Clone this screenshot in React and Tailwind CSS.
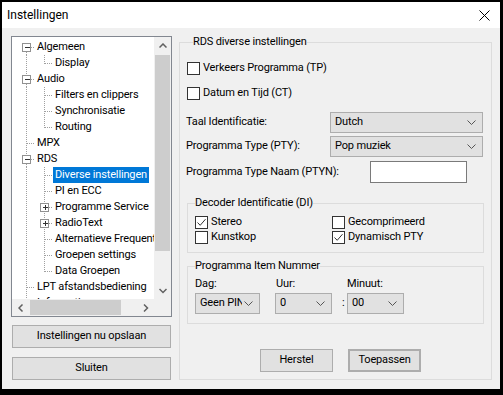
import React from "react";

const treeItems = [
  { t: "Algemeen", lvl: 0, exp: "-", first: true },
  { t: "Display", lvl: 1, lastChild: true },
  { t: "Audio", lvl: 0, exp: "-" },
  { t: "Filters en clippers", lvl: 1 },
  { t: "Synchronisatie", lvl: 1 },
  { t: "Routing", lvl: 1, lastChild: true },
  { t: "MPX", lvl: 0 },
  { t: "RDS", lvl: 0, exp: "-" },
  { t: "Diverse instellingen", lvl: 1, sel: true },
  { t: "PI en ECC", lvl: 1 },
  { t: "Programme Service", lvl: 1, exp: "+" },
  { t: "RadioText", lvl: 1, exp: "+" },
  { t: "Alternatieve Frequenties", lvl: 1 },
  { t: "Groepen settings", lvl: 1 },
  { t: "Data Groepen", lvl: 1, lastChild: true },
  { t: "LPT afstandsbediening", lvl: 0 },
  { t: "Informatie", lvl: 0 },
];

const dot = { stroke: "#a0a0a0", strokeWidth: 1, strokeDasharray: "1 1", shapeRendering: "crispEdges" };

const Expander = ({ cx, sign }) => (
  <g shapeRendering="crispEdges">
    <rect x={cx - 4} y={4.5} width={8} height={8} fill="#fff" stroke="#919191" />
    <line x1={cx - 2} y1={8.5} x2={cx + 3} y2={8.5} stroke="#333" />
    {sign === "+" && <line x1={cx + 0.5} y1={6} x2={cx + 0.5} y2={11} stroke="#333" />}
  </g>
);

const TreeRow = ({ item }) => {
  const root = item.lvl === 0;
  return (
    <div className="flex h-[16px] items-center whitespace-nowrap">
      <svg width={root ? 23 : 41} height="16" className="shrink-0">
        {root ? (
          <>
            {!item.first && <line x1="14.5" y1="0" x2="14.5" y2={item.exp ? 4 : 16} style={dot} />}
            <line x1="14.5" y1={item.exp ? 13 : 0} x2="14.5" y2="16" style={dot} />
            <line x1={item.exp ? 19 : 15} y1="8.5" x2="24" y2="8.5" style={dot} />
            {item.exp && <Expander cx={14.5} sign={item.exp} />}
          </>
        ) : (
          <>
            <line x1="14.5" y1="0" x2="14.5" y2="16" style={dot} />
            <line x1="32.5" y1="0" x2="32.5" y2={item.lastChild ? 9 : 16} style={dot} />
            <line x1={item.exp ? 37 : 33} y1="8.5" x2="42" y2="8.5" style={dot} />
            {item.exp && <Expander cx={32.5} sign={item.exp} />}
          </>
        )}
      </svg>
      <span
        className={`h-[16px] leading-[16px] px-[2px] ${
          item.sel ? "bg-[#0078d7] text-white" : "text-black"
        }`}
      >
        {item.t}
      </span>
    </div>
  );
};

const Chevron = ({ dir }) => {
  const pts = {
    up: "0.5,4.5 4,1 7.5,4.5",
    down: "0.5,1 4,4.5 7.5,1",
    left: "4.5,0.5 1,4 4.5,7.5",
    right: "1,0.5 4.5,4 1,7.5",
  }[dir];
  const vert = dir === "up" || dir === "down";
  return (
    <svg width={vert ? 8 : 6} height={vert ? 6 : 8}>
      <polyline points={pts} fill="none" stroke="#606060" strokeWidth="1.5" />
    </svg>
  );
};

const Checkbox = ({ checked, label }) => (
  <label className="flex items-center gap-[3px] h-full">
    <span className="w-[13px] h-[13px] border border-[#333] bg-white flex items-center justify-center shrink-0">
      {checked && (
        <svg width="11" height="11">
          <polyline points="1.5,5.5 4.2,8.3 9.5,2.2" fill="none" stroke="#333" strokeWidth="1" />
        </svg>
      )}
    </span>
    <span>{label}</span>
  </label>
);

const Select = ({ value, className }) => (
  <div
    className={`flex items-center justify-between border border-[#adadad] bg-[#e1e1e1] pl-[4px] pr-[6px] overflow-hidden whitespace-nowrap ${className}`}
  >
    <span className="overflow-hidden">{value}</span>
    <svg width="9" height="5" className="shrink-0 ml-[2px]">
      <polyline points="0.5,0.5 4.5,4.5 8.5,0.5" fill="none" stroke="#555" strokeWidth="1" />
    </svg>
  </div>
);

const Button = ({ children, className }) => (
  <button className={`bg-[#e1e1e1] border border-[#adadad] text-black ${className}`}>{children}</button>
);

export default function App() {
  return (
    <div className="w-[503px] h-[395px] bg-black pt-[2px] pl-[2px] font-['Roboto',sans-serif] text-[11px] tracking-[-0.15px] text-black">
      <div className="w-[498px] h-[387px] bg-[#f0f0f0] flex flex-col">
        {/* title bar */}
        <div className="h-[26px] bg-white flex items-center justify-between pl-[5px] pr-[10px] shrink-0">
          <span className="text-[12px] tracking-normal">Instellingen</span>
          <svg width="11" height="11">
            <line x1="0.5" y1="0.5" x2="10.5" y2="10.5" stroke="#000" strokeWidth="1" />
            <line x1="10.5" y1="0.5" x2="0.5" y2="10.5" stroke="#000" strokeWidth="1" />
          </svg>
        </div>

        {/* body */}
        <div className="flex items-start pl-[9px] pt-[6px]">
          {/* left column */}
          <div className="w-[161px] mt-[2px] flex flex-col">
            <div className="h-[281px] border border-[#828790] bg-white flex flex-col">
              <div className="flex h-[262px]">
                <div className="flex-1 overflow-hidden pt-[2px]">
                  {treeItems.map((it) => (
                    <TreeRow key={it.t} item={it} />
                  ))}
                </div>
                <div className="w-[17px] bg-[#f0f0f0] flex flex-col">
                  <div className="h-[17px] flex items-center justify-center">
                    <Chevron dir="up" />
                  </div>
                  <div className="flex-1">
                    <div className="mx-[1px] mt-[1px] h-[196px] bg-[#cdcdcd]" />
                  </div>
                  <div className="h-[17px] flex items-center justify-center">
                    <Chevron dir="down" />
                  </div>
                </div>
              </div>
              <div className="flex h-[17px] bg-[#f0f0f0]">
                <div className="flex-1 flex items-center">
                  <div className="w-[17px] flex items-center justify-center">
                    <Chevron dir="left" />
                  </div>
                  <div className="ml-[1px] w-[91px] h-[15px] bg-[#cdcdcd]" />
                  <div className="flex-1" />
                  <div className="w-[17px] flex items-center justify-center">
                    <Chevron dir="right" />
                  </div>
                </div>
                <div className="w-[17px]" />
              </div>
            </div>
            <Button className="ml-[1px] mt-[8px] w-[159px] h-[23px]">Instellingen nu opslaan</Button>
            <Button className="ml-[1px] mt-[9px] w-[159px] h-[23px]">Sluiten</Button>
          </div>

          {/* right group */}
          <fieldset className="ml-[7px] w-[313px] border border-[#dcdcdc] pl-[7px] pb-[7px]">
            <legend className="ml-[6px] px-0 leading-[16px]">RDS diverse instellingen</legend>
            <div className="mt-[10px] h-[17px]">
              <Checkbox label="Verkeers Programma (TP)" />
            </div>
            <div className="mt-[8px] h-[17px]">
              <Checkbox label="Datum en Tijd (CT)" />
            </div>
            <div className="mt-[10px] h-[21px] flex items-center">
              <span className="w-[144px] -ml-[1px]">Taal Identificatie:</span>
              <Select value="Dutch" className="w-[153px] h-[21px]" />
            </div>
            <div className="mt-[3px] h-[21px] flex items-center">
              <span className="w-[144px] -ml-[1px]">Programma Type (PTY):</span>
              <Select value="Pop muziek" className="w-[153px] h-[21px]" />
            </div>
            <div className="mt-[4px] h-[22px] flex items-center">
              <span className="w-[184px] -ml-[1px]">Programma Type Naam (PTYN):</span>
              <div className="w-[97px] h-[22px] bg-white border border-[#7a7a7a]" />
            </div>

            <fieldset className="mt-[12px] w-[297px] border border-[#dcdcdc] pl-[7px] pb-[7px]">
              <legend className="px-0 leading-[16px]">Decoder Identificatie (DI)</legend>
              <div className="mt-[4px] grid grid-cols-[137px_1fr]">
                <div className="h-[15px]">
                  <Checkbox checked label="Stereo" />
                </div>
                <div className="h-[15px]">
                  <Checkbox label="Gecomprimeerd" />
                </div>
                <div className="h-[15px]">
                  <Checkbox label="Kunstkop" />
                </div>
                <div className="h-[15px]">
                  <Checkbox checked label="Dynamisch PTY" />
                </div>
              </div>
            </fieldset>

            <fieldset className="mt-[5px] w-[297px] border border-[#dcdcdc] pl-[7px] pb-[9px]">
              <legend className="px-0 leading-[16px]">Programma Item Nummer</legend>
              <div className="mt-[2px] h-[16px] flex items-center">
                <span className="w-[81px]">Dag:</span>
                <span className="w-[71px]">Uur:</span>
                <span>Minuut:</span>
              </div>
              <div className="mt-[1px] flex items-center">
                <Select value="Geen PIN" className="w-[65px] h-[21px]" />
                <Select value="0" className="ml-[15px] w-[57px] h-[21px]" />
                <span className="ml-[10px] w-[5px]">:</span>
                <Select value="00" className="w-[57px] h-[21px]" />
              </div>
            </fieldset>

            <div className="mt-[25px] flex">
              <Button className="ml-[73px] w-[73px] h-[23px]">Herstel</Button>
              <Button className="ml-[15px] w-[73px] h-[23px] border-2 border-[#0078d7]">Toepassen</Button>
            </div>
          </fieldset>
        </div>
      </div>
    </div>
  );
}
